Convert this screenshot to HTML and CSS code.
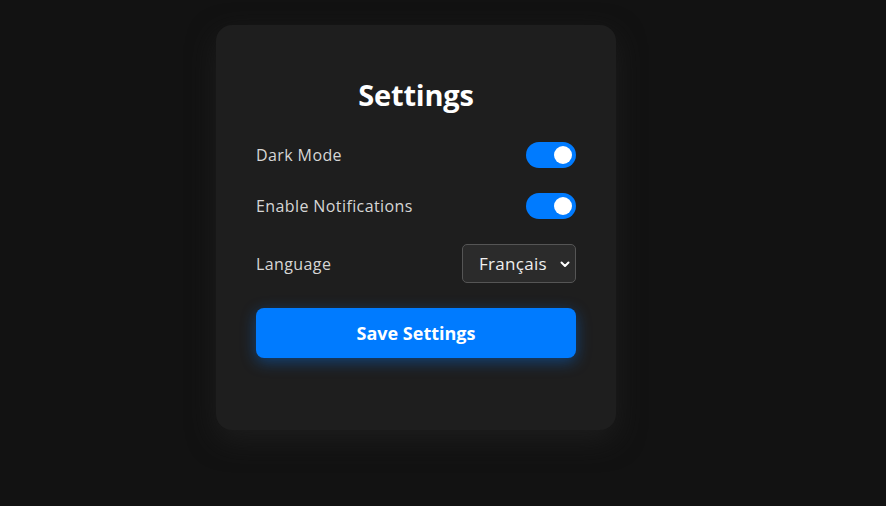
FILE: index.html
```html
<!DOCTYPE html>
<html lang="en">
<head>
<meta charset="utf-8">
<title>Settings</title>
<link rel="stylesheet" href="styles.css">
</head>
<body>
<div class="card">
  <h2 class="title">Settings</h2>
  <div class="row">
    <span class="label">Dark Mode</span>
    <label class="switch"><input type="checkbox" checked><span class="slider"></span></label>
  </div>
  <div class="row">
    <span class="label">Enable Notifications</span>
    <label class="switch"><input type="checkbox" checked><span class="slider"></span></label>
  </div>
  <div class="row">
    <span class="label">Language</span>
    <div class="select">
      <span>Français</span>
      <svg class="chev" width="10" height="8" viewBox="0 0 10 8"><path d="M1.5 2.5 L5 6 L8.5 2.5" fill="none" stroke="#fff" stroke-width="2" stroke-linecap="round" stroke-linejoin="round"/></svg>
    </div>
  </div>
  <button class="save">Save Settings</button>
</div>
</body>
</html>
```
FILE: styles.css
```css
* { box-sizing: border-box; }
html, body { margin: 0; padding: 0; }
body {
  background: #121212;
  font-family: "Open Sans", "Noto Sans", sans-serif;
  color: #dcdcdc;
  height: 506px;
  overflow: hidden;
  display: flex;
  justify-content: center;
  align-items: flex-start;
  padding-right: 54px;
}
.card {
  margin-top: 25px;
  width: 400px;
  height: 405px;
  background: #1e1e1e;
  border-radius: 16px;
  padding: 54px 40px 40px;
  box-shadow: 0 10px 28px rgba(30,30,30,0.9);
  display: flex;
  flex-direction: column;
}
.title {
  margin: 0 0 31px;
  text-align: center;
  color: #fff;
  font-size: 29px;
  font-weight: 700;
  line-height: 32px;
  letter-spacing: -0.2px;
}
.row {
  display: flex;
  justify-content: space-between;
  align-items: center;
  margin-bottom: 25px;
}
.label {
  font-size: 16px;
  letter-spacing: 0.4px;
  color: #d6d6d6;
}
.switch {
  position: relative;
  display: block;
  width: 50px;
  height: 26px;
}
.switch input { display: none; }
.slider {
  position: absolute;
  inset: 0;
  background: #007bff;
  border-radius: 13px;
}
.slider::after {
  content: "";
  position: absolute;
  right: 4px;
  top: 4px;
  width: 18px;
  height: 18px;
  border-radius: 50%;
  background: #fff;
}
.select {
  width: 114px;
  height: 39px;
  background: #2b2b2b;
  border: 1px solid #555;
  border-radius: 5px;
  display: flex;
  align-items: center;
  justify-content: space-between;
  padding: 0 5px 0 16px;
  color: #f0f0f0;
  font-size: 17px;
  letter-spacing: 0.3px;
}
.chev { display: block; }
.save {
  height: 50px;
  width: 100%;
  border: none;
  border-radius: 8px;
  background: #007bff;
  color: #fff;
  font-family: inherit;
  font-size: 18px;
  font-weight: 700;
  letter-spacing: 0;
  box-shadow: 0 4px 15px rgba(0,123,255,0.4);
}
```
